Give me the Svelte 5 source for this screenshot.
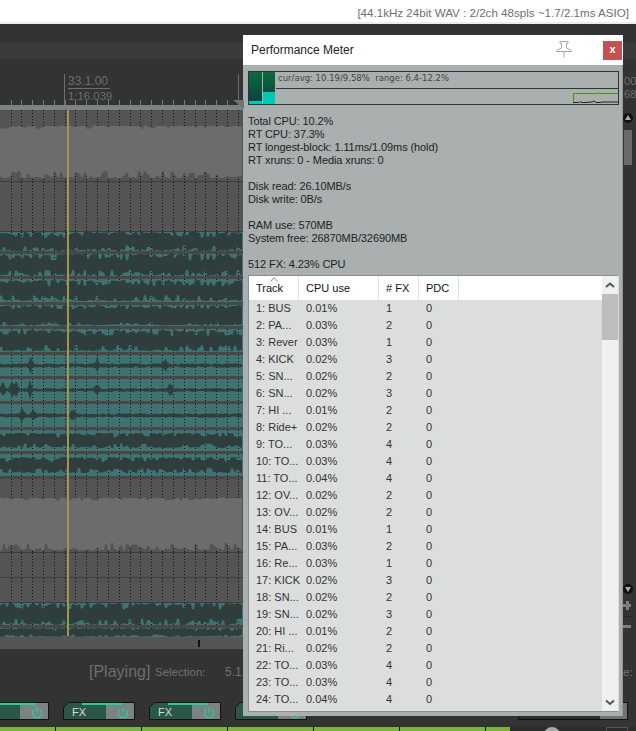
<script>
  function rng(seed) {
    let s = seed;
    return () => {
      s = (s * 1664525 + 1013904223) % 4294967296;
      return s / 4294967296;
    };
  }

  function wave(seed, h, amp, jag, spikes = [], lowerJag = 1) {
    const r = rng(seed);
    const mid = h / 2;
    const top = [];
    const bot = [];
    let t = 0;
    let t2 = 0;
    for (let x = 0; x <= 242; x++) {
      if (x % 3 === 0) {
        t = r() > 0.5 ? r() * 0.25 : r();
        t2 = r() > 0.5 ? r() * 0.25 : r();
      }
      let a = amp * (1 - jag * t);
      let b = amp * (1 - jag * lowerJag * t2);
      for (const sp of spikes) {
        const d = Math.abs(x - sp);
        if (d < 4) {
          const peak = 0.95 * (1 - d / 4.5) * (0.45 + 0.55 * r());
          a = Math.max(a, peak);
          b = Math.max(b, peak * (0.6 + 0.4 * r()));
        }
      }
      top.push(`${x},${(mid - a * mid).toFixed(1)}`);
      bot.unshift(`${x},${(mid + b * mid).toFixed(1)}`);
    }
    return 'M' + top.join(' L') + ' L' + bot.join(' L') + 'Z';
  }

  const teal = [
    { h: 22, amp: 1, jag: 0.6, seed: 11 },
    { h: 25, amp: 1, jag: 0.6, seed: 22 },
    { h: 26, amp: 0.92, jag: 0.58, seed: 33 },
    { h: 24, amp: 0.95, jag: 0.35, seed: 44 },
    { h: 26, amp: 0.92, jag: 0.58, seed: 55 },
    { h: 24, amp: 0.2, jag: 0.6, seed: 66, spikes: [31, 97, 165] },
    { h: 25, amp: 0.16, jag: 0.6, seed: 77, spikes: [3, 12, 16, 30, 97, 170] },
    { h: 26, amp: 0.18, jag: 0.6, seed: 88, spikes: [23, 33, 73] },
    { h: 24, amp: 0.72, jag: 0.62, seed: 99 },
    { h: 25, amp: 0.72, jag: 0.65, seed: 110 }
  ].map((t) => ({ ...t, d: wave(t.seed, t.h - 3, t.amp, t.jag, t.spikes || []) }));

  const greyWave1 = wave(7, 54, 0.98, 0.12, [], 2.4);
  const greyWave2 = wave(9, 54, 0.98, 0.12, [], 2.4);
  const lastTeal = wave(121, 22, 1, 0.6);
  const lastTeal2 = wave(133, 9, 0.95, 0.6);

  const gridX = Array.from({ length: 22 }, (_, i) => Math.round(10.5 + i * 10.83));

  const names = ['BUS','PA...','Rever','KICK','SN...','SN...','HI ...','Ride+','TO...','TO...','TO...','OV...','OV...','BUS','PA...','Re...','KICK','SN...','SN...','HI ...','Ri...','TO...','TO...','TO...'];
  const cpu = ['0.01','0.03','0.03','0.02','0.02','0.02','0.01','0.02','0.03','0.03','0.04','0.02','0.02','0.01','0.03','0.03','0.02','0.02','0.02','0.01','0.02','0.03','0.03','0.04'];
  const fx = [1,2,1,3,2,3,2,2,4,4,4,2,2,1,2,1,3,2,3,2,2,4,4,4];
  const rows = names.map((n, i) => ({ name: `${i + 1}: ${n}`, cpu: cpu[i] + '%', fx: fx[i] }));

  const stats = [
    ['Total CPU: 10.2%', 'RT CPU: 37.3%', 'RT longest-block: 1.11ms/1.09ms (hold)', 'RT xruns: 0 - Media xruns: 0'],
    ['Disk read: 26.10MB/s', 'Disk write: 0B/s'],
    ['RAM use: 570MB', 'System free: 26870MB/32690MB'],
    ['512 FX: 4.23% CPU']
  ];
  const fxButtons = [0, 1, 2, 3];
  const greenCells = [0, 1, 2, 3, 4, 5, 6];
</script>

{#snippet lane(h, d, dy, fill)}
  <svg width="243" height={h} aria-hidden="true">
    {#each gridX as x}
      <line x1={x + 0.5} x2={x + 0.5} y1="0" y2={h} stroke="#111" stroke-dasharray="1 2" />
    {/each}
    {#if d}<path d={d} fill={fill} transform="translate(0 {dy})" />{/if}
  </svg>
{/snippet}

<div class="daw">
  <div class="status">[44.1kHz 24bit WAV : 2/2ch 48spls ~1.7/2.1ms ASIO]</div>
  <div class="toolbar"></div>
  <div class="band"></div>
  <div class="ruler">
    <div class="marker">
      <span class="bar-pos">33.1.00</span>
      <span class="time-pos">1:16.039</span>
    </div>
    <div class="marker2"></div>
    <div class="marker3"><span>00</span><span>68</span></div>
    <svg class="ruler-ticks" width="243" height="5" aria-hidden="true">
      {#each gridX as x}<line x1={x + 0.5} x2={x + 0.5} y1="0" y2="5" stroke="#777" />{/each}
    </svg>
    <svg class="flag" width="11" height="9" aria-hidden="true"><path d="M0 0H11V9Z" fill="#6e7573" /></svg>
  </div>
  <div class="strip"></div>

  <div class="arrange">
    <div class="lane grey h72">{@render lane(71, greyWave1, 15, '#6c6c6c')}</div>
    <div class="lane grey h50">{@render lane(49)}</div>
    {#each teal as t}
      <div class="lane teal" style="height: {t.h}px">{@render lane(t.h - 3, t.d, 0, '#2f3d3d')}</div>
    {/each}
    <div class="lane grey h74">{@render lane(73, greyWave2, 18, '#6c6c6c')}</div>
    <div class="lane grey h25">{@render lane(24)}</div>
    <div class="lane grey h25">{@render lane(24)}</div>
    <div class="lane teal h25">{@render lane(22, lastTeal, 0, '#2f3d3d')}</div>
    <div class="lane teal h9">{@render lane(9, lastTeal2, 0, '#2f3d3d')}</div>
    <span class="playhead"></span>
    <div class="side-scroll">
      <span class="round up"></span>
      <span class="thumb"></span>
      <span class="round down"></span>
      <span class="plus-h"></span>
      <span class="plus-v"></span>
      <span class="zoom-line"></span>
      <span class="minus"></span>
    </div>
  </div>

  <div class="timeline"><span class="tick"></span></div>

  <div class="transport">
    <span class="playing">[Playing]</span>
    <span class="sel">Selection:</span>
    <span class="sel sel-val">5.1</span>
    <span class="sel sel-end">e:</span>
  </div>

  <div class="fx-row">
    {#each fxButtons as b}
      <svg class="fx" width="72" height="18" viewBox="0 0 72 18">
        <path d="M5.5.5H71.5V17.5H.5V5.5Z" fill="#2a5747" stroke="#111" />
        <rect x="43" y="1" width="28" height="16" fill="#7b8482" />
        <rect x="19" y="1" width="40" height="2" fill="#17d69a" />
        {#if b > 0}<text x="9" y="14" class="fx-label">FX</text>{/if}
        <path d="M60 5.5v4.5 M57.3 7.5a4.6 4.6 0 1 0 5.4 0" fill="none" stroke="#1fd09a" stroke-width="1.3" />
      </svg>
    {/each}
    <div class="right-box"></div>
  </div>

  <div class="green-row">
    <div class="greens">
      {#each greenCells as c}<span class="green"></span>{/each}
    </div>
    <span class="knob"></span>
    <span class="box"></span>
  </div>

  <section class="meter">
    <header class="title">
      <h1>Performance Meter</h1>
      <svg class="pin" width="16" height="17" viewBox="0 0 16 17" aria-hidden="true">
        <path d="M4 .5H12V2.5H10.5V7L15.5 9.5V10.5H.5V9.5L5.5 7V2.5H4ZM8 10.5V16.5" fill="#fff" stroke="#a8a8a8" />
      </svg>
      <button class="close">x</button>
    </header>

    <div class="body">
      <div class="graph">
        <div class="bar"><span class="level l1"></span></div>
        <div class="bar b2"><span class="level l2"></span></div>
        <div class="readout">cur/avg: 10.19/9.58%&nbsp;&nbsp;range: 6.4-12.2%</div>
        <div class="rule"></div>
        <svg class="history" width="45" height="16" viewBox="0 0 45 16" aria-hidden="true">
          <path d="M.5 14V5.5H24V5H26V5.5H45" fill="none" stroke="#3f9c00" />
          <path d="M0 14.5H6L7 13.5L9 14.5H14L16 14H19L21 13L23 14.5H27L29 14H45" fill="none" stroke="#222" />
        </svg>
      </div>

      <div class="stats">
        {#each stats as group}
          <div class="group">
            {#each group as line}<div>{line}</div>{/each}
          </div>
        {/each}
      </div>

      <div class="list">
        <div class="table">
          <div class="head">
            <span class="col c1">Track<i class="sort"></i></span>
            <span class="col c2">CPU use</span>
            <span class="col c3"># FX</span>
            <span class="col c4">PDC</span>
            <span class="col c5"></span>
          </div>
          <div class="rows">
            {#each rows as r}
              <div class="row">
                <span class="c1">{r.name}</span>
                <span class="c2">{r.cpu}</span>
                <span class="c3">{r.fx}</span>
                <span class="c4">0</span>
              </div>
            {/each}
          </div>
        </div>
        <div class="scroll">
          <svg class="arrow" width="16" height="18" aria-hidden="true"><path d="M4 11L8 7.5L12 11" fill="none" stroke="#555" stroke-width="2" /></svg>
          <div class="scroll-thumb"></div>
          <svg class="arrow end" width="16" height="18" aria-hidden="true"><path d="M4 7.5L8 11L12 7.5" fill="none" stroke="#555" stroke-width="2" /></svg>
        </div>
      </div>
    </div>
  </section>
</div>

<style>
  :global(body) {
    margin: 0;
    background: #333;
  }
  .daw {
    position: relative;
    width: 636px;
    height: 731px;
    overflow: hidden;
    background: #333;
    font-family: "Liberation Sans", Arial, sans-serif;
    display: flex;
    flex-direction: column;
  }
  .status {
    height: 22px;
    box-sizing: border-box;
    background: #fff;
    padding: 5px 7px 0 0;
    text-align: right;
    font-size: 11.6px;
    line-height: 15px;
    color: #6f6f6f;
    white-space: nowrap;
    flex: none;
  }
  .toolbar {
    height: 20px;
    flex: none;
    background: #333;
    border-top: 2px solid #ececec;
    box-sizing: border-box;
  }
  .band {
    height: 16px;
    flex: none;
    background: #3b3b3b;
  }
  .ruler {
    height: 47px;
    flex: none;
    position: relative;
    background: #333;
  }
  .marker {
    position: absolute;
    left: 64px;
    top: 16px;
    height: 31px;
    border-left: 1px solid #6d6d6d;
    padding-left: 3px;
    display: flex;
    flex-direction: column;
    width: 42px;
    color: #6b6f70;
    font-size: 11.4px;
    line-height: 13px;
  }
  .bar-pos {
    border-bottom: 1px solid #6d6d6d;
    padding-top: 1px;
    font-size: 12px;
  }
  .time-pos {
    padding-top: 1px;
  }
  .marker2 {
    position: absolute;
    left: 238px;
    top: 16px;
    height: 31px;
    border-left: 1px solid #6d6d6d;
  }
  .marker3 {
    position: absolute;
    left: 624px;
    top: 17px;
    display: flex;
    flex-direction: column;
    font-size: 11.4px;
    line-height: 13px;
    color: #6b6f70;
  }
  .ruler-ticks {
    position: absolute;
    left: 0;
    bottom: 0;
  }
  .flag {
    position: absolute;
    left: 233px;
    top: 42px;
    z-index: 1;
  }
  .strip {
    height: 5px;
    width: 243px;
    flex: none;
    background: #7b8280;
  }
  .arrange {
    position: relative;
    height: 527px;
    flex: none;
    display: flex;
    flex-direction: column;
  }
  .lane {
    flex: none;
    width: 243px;
    box-sizing: border-box;
    overflow: hidden;
  }
  .lane :global(svg) {
    display: block;
  }
  .grey {
    background: #545454;
    border-bottom: 1px solid #3c3c3c;
  }
  .teal {
    background: #3f7372;
    border-bottom: 3px solid #4b4646;
  }
  .h72 { height: 72px; }
  .h50 { height: 50px; }
  .h74 { height: 74px; }
  .h25 { height: 25px; }
  .h9 { height: 9px; border-bottom: 0; }
  .playhead {
    position: absolute;
    left: 67px;
    top: 0;
    width: 2px;
    height: 526px;
    background: #a8934a;
  }
  .side-scroll {
    position: absolute;
    left: 623px;
    top: 0;
    width: 13px;
    height: 527px;
  }
  .side-scroll > * {
    position: absolute;
  }
  .round {
    width: 10px;
    height: 10px;
    left: 0;
    border-radius: 50%;
    background: #111;
  }
  .round::after {
    content: "";
    position: absolute;
    left: 2px;
    border-left: 3px solid transparent;
    border-right: 3px solid transparent;
  }
  .up { top: 3px; }
  .up::after { top: 2px; border-bottom: 5px solid #aaa; }
  .down { top: 474px; }
  .down::after { top: 3px; border-top: 5px solid #aaa; }
  .thumb {
    left: 1px;
    top: 20px;
    width: 8px;
    height: 35px;
    background: #6a6a6a;
  }
  .plus-h {
    left: 0;
    top: 494px;
    width: 8px;
    height: 3px;
    background: #7f7f7f;
  }
  .plus-v {
    left: 3px;
    top: 491px;
    width: 3px;
    height: 9px;
    background: #7f7f7f;
  }
  .zoom-line {
    left: 0;
    top: 506px;
    width: 8px;
    height: 1px;
    background: #222;
  }
  .minus {
    left: 0;
    top: 515px;
    width: 8px;
    height: 3px;
    background: #7f7f7f;
  }
  .timeline {
    height: 12px;
    width: 243px;
    flex: none;
    background: #555;
    position: relative;
  }
  .tick {
    position: absolute;
    left: 198px;
    top: 3px;
    width: 2px;
    height: 7px;
    background: #111;
  }
  .transport {
    height: 53px;
    flex: none;
    position: relative;
  }
  .transport > * {
    position: absolute;
    white-space: nowrap;
  }
  .playing {
    left: 89px;
    top: 13px;
    font-size: 16px;
    line-height: 20px;
    color: #6a6f74;
  }
  .sel {
    left: 155px;
    top: 16px;
    font-size: 11.5px;
    line-height: 15px;
    color: #6f7376;
  }
  .sel-val {
    left: 225px;
    font-size: 12px;
  }
  .sel-end {
    left: 623px;
  }
  .fx-row {
    height: 25px;
    flex: none;
    display: flex;
    gap: 14px;
    margin-left: -23px;
    position: relative;
    align-items: flex-start;
  }
  .fx {
    flex: none;
    display: block;
  }
  .fx-label {
    font-family: "Liberation Sans", sans-serif;
    font-size: 11px;
    fill: #d5dbd8;
  }
  .right-box {
    position: absolute;
    left: 541px;
    top: 0;
    width: 108px;
    height: 16px;
    border: 1px solid #111;
    background: linear-gradient(90deg, #2a2f2d 75%, #6f7573 75%);
  }
  .green-row {
    height: 4px;
    flex: none;
    position: relative;
    background: #2d2d2d;
    margin-left: -30px;
  }
  .greens {
    width: 540px;
    height: 4px;
    display: flex;
    overflow: hidden;
  }
  .green {
    width: 86px;
    box-sizing: border-box;
    border-right: 1px solid #111;
    background: #7ab53a;
    flex: none;
  }
  .knob {
    position: absolute;
    left: 574px;
    top: 0;
    width: 16px;
    height: 16px;
    border-radius: 50%;
    background: #aaa;
  }
  .box {
    position: absolute;
    left: 636px;
    top: 0;
    width: 20px;
    height: 10px;
    border: 1px solid #555;
  }
  .meter {
    position: absolute;
    left: 243px;
    top: 35px;
    width: 380px;
    height: 681px;
    background: #fff;
    display: flex;
    flex-direction: column;
  }
  .title {
    height: 30px;
    flex: none;
    display: flex;
    align-items: center;
    padding: 0 1px 0 8px;
    position: relative;
  }
  h1 {
    margin: 0;
    font-weight: normal;
    font-size: 12px;
    color: #222;
    flex: 1;
    padding-bottom: 1px;
  }
  .pin {
    position: absolute;
    left: 313px;
    top: 6px;
  }
  .close {
    width: 19px;
    height: 19px;
    margin: 0;
    padding: 0 0 2px;
    border: 0;
    background: #c75050;
    color: #fff;
    font: bold 11px/1 "Liberation Sans", sans-serif;
  }
  .body {
    flex: 1;
    min-height: 0;
    background: #a9b0af;
    display: flex;
    flex-direction: column;
    padding: 6px 3px 4px 5px;
    border-right: 1px solid #8f9695;
    box-sizing: border-box;
  }
  .graph {
    position: relative;
    width: 371px;
    height: 34px;
    box-sizing: border-box;
    border: 1px solid #333;
    flex: none;
    display: flex;
    gap: 1px;
  }
  .bar {
    width: 13px;
    height: 32px;
    position: relative;
    background: linear-gradient(#0b6b3f, #063f3e);
  }
  .b2 {
    width: 12px;
  }
  .level {
    position: absolute;
    left: 0;
    right: 0;
    bottom: 0;
    background: #00c9b6;
  }
  .l1 { height: 3px; }
  .l2 { height: 12px; }
  .readout {
    padding: 1px 0 0 2px;
    font-family: "DejaVu Sans", Verdana, sans-serif;
    font-size: 8.5px;
    line-height: 11px;
    color: #444;
    white-space: nowrap;
  }
  .rule {
    position: absolute;
    left: 27px;
    right: 0;
    top: 16px;
    height: 1px;
    background: #333;
  }
  .history {
    position: absolute;
    right: 0;
    bottom: 0;
  }
  .stats {
    flex: none;
    padding-top: 10px;
    font-size: 11px;
    letter-spacing: -0.1px;
    line-height: 13px;
    color: #222;
    height: 170px;
    box-sizing: border-box;
  }
  .group {
    margin-bottom: 13px;
    white-space: nowrap;
  }
  .list {
    width: 371px;
    flex: 1;
    min-height: 0;
    box-sizing: border-box;
    display: flex;
    background: #dcdedd;
    border: 1px solid #888e8d;
    border-right-color: #d8dbda;
    overflow: hidden;
  }
  .table {
    width: 353px;
    flex: none;
    font-size: 11px;
    color: #333;
  }
  .head {
    height: 24px;
    display: flex;
    background: #fff;
    color: #111;
    line-height: 24px;
  }
  .col {
    position: relative;
    box-sizing: border-box;
    border-right: 1px solid #e3e3e3;
    height: 24px;
  }
  .c1, .c2, .c3, .c4 {
    box-sizing: border-box;
    padding-left: 7px;
  }
  .c1 { width: 50px; }
  .c2 { width: 80px; }
  .c3 { width: 40px; }
  .c4 { width: 40px; }
  .c5 { flex: 1; border-right: 0; }
  .sort {
    position: absolute;
    left: 22px;
    top: 2px;
    width: 5px;
    height: 5px;
    border-left: 1px solid #999;
    border-top: 1px solid #999;
    transform: rotate(45deg) scale(.9);
  }
  .rows {
    background: #dcdedd;
  }
  .row {
    display: flex;
    height: 17px;
    line-height: 17px;
    white-space: nowrap;
  }
  .scroll {
    width: 16px;
    flex: none;
    background: #f0f0f0;
    display: flex;
    flex-direction: column;
  }
  .arrow {
    display: block;
    flex: none;
  }
  .arrow.end {
    margin-top: auto;
  }
  .scroll-thumb {
    height: 46px;
    background: #bdbdbd;
    flex: none;
  }
</style>
